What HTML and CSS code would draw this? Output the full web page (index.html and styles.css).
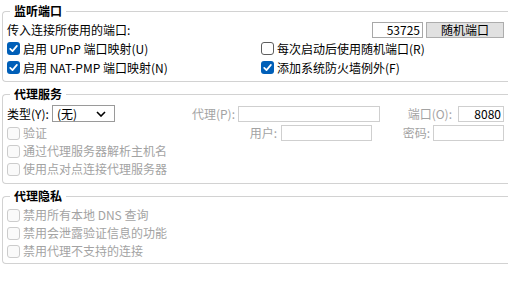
FILE: index.html
```html
<!DOCTYPE html>
<html lang="zh-CN">
<head>
<meta charset="utf-8">
<title>连接</title>
<link rel="stylesheet" href="styles.css">
</head>
<body>
<fieldset class="group g1">
  <legend class="title">监听端口</legend>
  <div class="row port-row">
    <span class="text">传入连接所使用的端口:</span>
    <span class="field port-field">53725</span>
    <span class="button">随机端口</span>
  </div>
  <div class="row two-col">
    <label class="check"><span class="box checked"><svg viewBox="0 0 13 13" width="13" height="13"><path d="M3.2 6.8 L5.5 9.1 L9.9 3.9" fill="none" stroke="#fff" stroke-width="1.7" stroke-linecap="round" stroke-linejoin="round"/></svg></span>启用 UPnP 端口映射(U)</label>
    <label class="check"><span class="box"></span>每次启动后使用随机端口(R)</label>
  </div>
  <div class="row two-col">
    <label class="check"><span class="box checked"><svg viewBox="0 0 13 13" width="13" height="13"><path d="M3.2 6.8 L5.5 9.1 L9.9 3.9" fill="none" stroke="#fff" stroke-width="1.7" stroke-linecap="round" stroke-linejoin="round"/></svg></span>启用 NAT-PMP 端口映射(N)</label>
    <label class="check"><span class="box checked"><svg viewBox="0 0 13 13" width="13" height="13"><path d="M3.2 6.8 L5.5 9.1 L9.9 3.9" fill="none" stroke="#fff" stroke-width="1.7" stroke-linecap="round" stroke-linejoin="round"/></svg></span>添加系统防火墙例外(F)</label>
  </div>
</fieldset>

<fieldset class="group g2">
  <legend class="title">代理服务</legend>
  <div class="row proxy-row">
    <span class="text type-label">类型(Y):</span>
    <span class="select">(无)<svg class="chev" viewBox="0 0 10 6" width="10" height="6"><path d="M1 1 L5 5 L9 1" fill="none" stroke="#000" stroke-width="1.6"/></svg></span>
    <span class="text dim proxy-label">代理(P):</span>
    <span class="field off proxy-field"></span>
    <span class="text dim port-label">端口(O):</span>
    <span class="field off small-port">8080</span>
  </div>
  <div class="row auth-row">
    <label class="check dim auth-check"><span class="box off"></span>验证</label>
    <span class="text dim user-label">用户:</span>
    <span class="field off user-field"></span>
    <span class="text dim pass-label">密码:</span>
    <span class="field off pass-field"></span>
  </div>
  <div class="row">
    <label class="check dim"><span class="box off"></span>通过代理服务器解析主机名</label>
  </div>
  <div class="row">
    <label class="check dim"><span class="box off"></span>使用点对点连接代理服务器</label>
  </div>
</fieldset>

<fieldset class="group g3">
  <legend class="title">代理隐私</legend>
  <div class="row">
    <label class="check dim"><span class="box off"></span>禁用所有本地 DNS 查询</label>
  </div>
  <div class="row">
    <label class="check dim"><span class="box off"></span>禁用会泄露验证信息的功能</label>
  </div>
  <div class="row">
    <label class="check dim"><span class="box off"></span>禁用代理不支持的连接</label>
  </div>
</fieldset>
</body>
</html>
```

FILE: styles.css
```css
html, body {
  margin: 0;
  padding: 0;
  background: #ffffff;
  overflow: hidden;
}

body {
  width: 508px;
  height: 286px;
  font-family: "Noto Sans CJK SC", "Noto Sans", sans-serif;
  font-size: 12px;
  color: #000000;
}

.group {
  box-sizing: border-box;
  margin: 4px 0 0 2px;
  padding: 0 0 4px 4px;
  width: 506px;
  border: 1px solid #d2d2d2;
  border-right: none;
  border-radius: 4px 0 0 4px;
  min-inline-size: 0;
}

.g1 {
  margin-top: 3px;
}

.title {
  padding: 0 4px;
  margin-left: 3px;
  font-weight: 700;
  line-height: 16px;
  height: 16px;
}

.row {
  display: flex;
  align-items: center;
  width: 497px;
  height: 18px;
  line-height: 18px;
  white-space: nowrap;
}

.port-row {
  height: 19px;
  margin-top: 1px;
}

.g1 .two-col {
  height: 19px;
}

.two-col {
  display: grid;
  grid-template-columns: 254px 1fr;
  align-items: center;
}

.check {
  display: flex;
  align-items: center;
}

.box {
  flex: none;
  width: 13px;
  height: 13px;
  box-sizing: border-box;
  border: 1px solid #5e5e5e;
  border-radius: 3px;
  margin-right: 3px;
  background: #ffffff;
  display: flex;
}

.box.checked {
  border: none;
  background: #005fb8;
}

.box.off {
  border-color: #cccccc;
  background: #fafafa;
}

.dim {
  color: #a3a3a3;
}

.field {
  box-sizing: border-box;
  height: 16px;
  line-height: 14px;
  border: 1px solid #a8a8a8;
  background: #ffffff;
  text-align: right;
  padding: 0 2px;
}

.field.off {
  border-color: #cfcfcf;
}

.port-field {
  margin-left: auto;
  width: 51px;
  color: #000;
}

.button {
  box-sizing: border-box;
  width: 78px;
  height: 16px;
  line-height: 14px;
  margin-left: 3px;
  border: 1px solid #adadad;
  background: #e1e1e1;
  text-align: center;
}

.proxy-row {
  height: 21px;
  margin-top: 1px;
}

.type-label {
  width: 45px;
}

.select {
  box-sizing: border-box;
  width: 63px;
  height: 17px;
  line-height: 15px;
  border: 1px solid #9a9a9a;
  padding-left: 4px;
  display: flex;
  align-items: center;
  justify-content: space-between;
  padding-right: 8px;
}

.chev {
  display: block;
}

.proxy-label {
  width: 120px;
  text-align: right;
}

.proxy-field {
  margin-left: 3px;
  width: 142px;
}

.port-label {
  width: 72px;
  text-align: right;
}

.small-port {
  margin-left: 6px;
  width: 46px;
  color: #000;
}

.auth-check {
  width: 241px;
}

.user-label {
  width: 29px;
  text-align: right;
}

.user-field {
  margin-left: 4px;
  width: 91px;
}

.pass-label {
  width: 58px;
  text-align: right;
}

.pass-field {
  margin-left: 3px;
  width: 71px;
}

.g2 {
  padding-bottom: 5px;
}

.g3 {
  padding-bottom: 3px;
}

.g3 .row:first-of-type {
  margin-top: 2px;
}
```
